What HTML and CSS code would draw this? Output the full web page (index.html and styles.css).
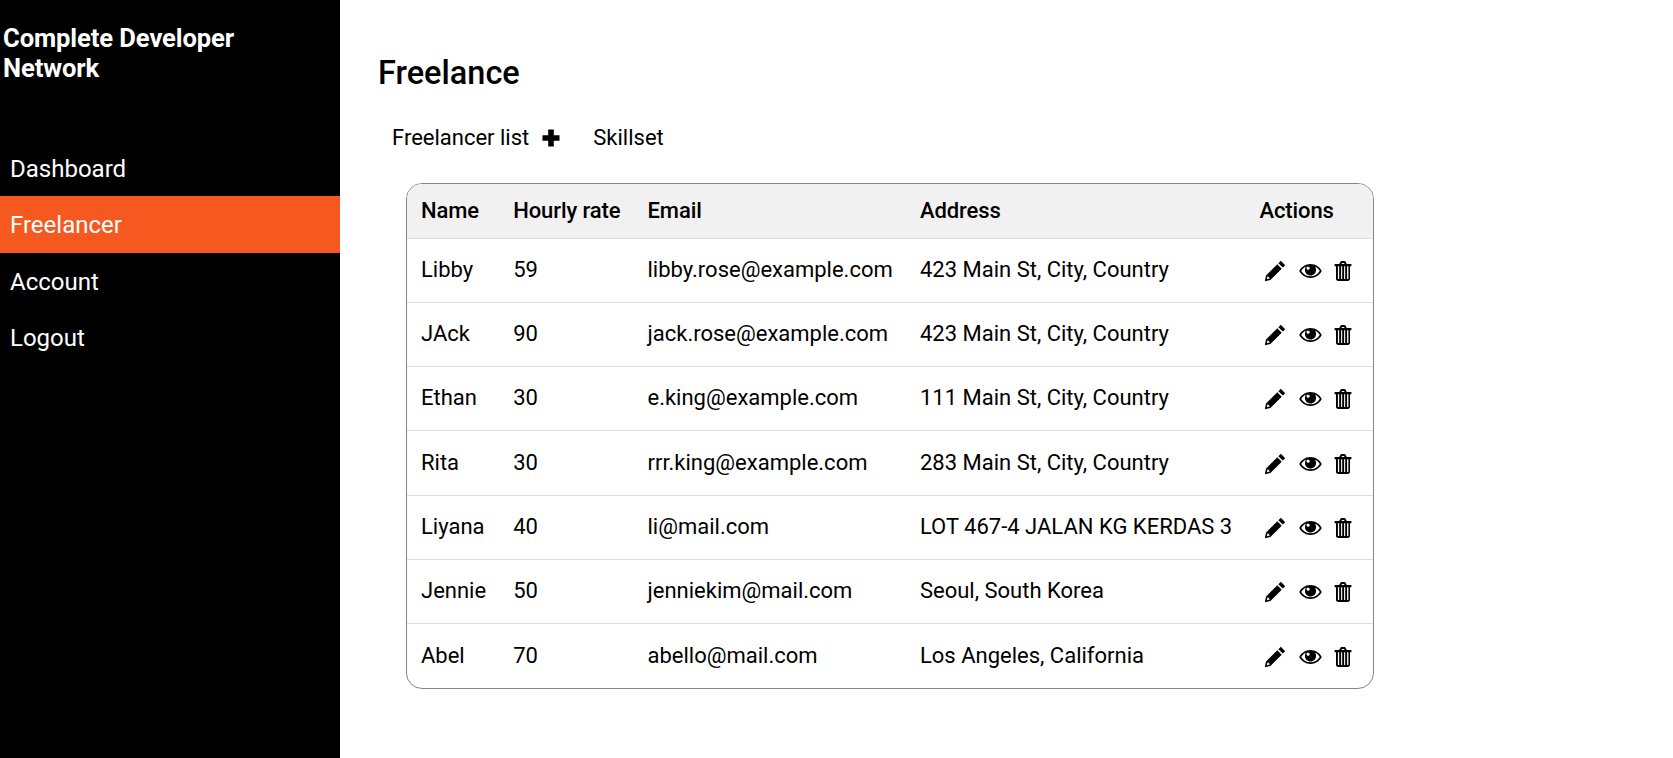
FILE: index.html
```html
<!DOCTYPE html>
<html>
<head>
    <title>Freelance</title>
    <link rel="stylesheet" href="styles.css">
</head>
<body>
    <svg class="sprites" width="0" height="0">
        <symbol id="i-pencil" viewBox="0 0 22 22">
            <path d="M16.800 .8 21.200 5.200 18.800 7.600 14.400 3.200Z"/>
            <path fill-rule="evenodd" d="M13.300 4.300 17.700 8.700 6.400 20 .8 21.200 2 15.600ZM3.600 16.200 2.800 19.200 5.800 18.400 5.400 17.800 4.100 16.500Z"/>
        </symbol>
        <symbol id="i-eye" viewBox="0 0 24 16">
            <path fill-rule="evenodd" d="M12 .8C6.800.8 2.600 3.700.2 8c2.400 4.300 6.600 7.200 11.800 7.200S21.400 12.300 23.800 8C21.400 3.700 17.200.8 12 .8ZM2.300 8C3.600 6 5.300 4.400 7.400 3.400 6.600 4.400 6.200 5.600 6.200 7c0 3.200 2.600 5.800 5.800 5.800s5.800-2.600 5.800-5.800c0-1.400-.4-2.600-1.200-3.600 2.100 1 3.800 2.600 5.100 4.600-2.300 3.500-5.800 5.600-9.700 5.600S4.600 11.500 2.300 8Z"/>
            <path fill="#fff" d="M9.500 3.600c1 0 1.700.6 1.700 1.500S10.500 6.700 9.500 6.700 7.800 6 7.800 5.100 8.500 3.600 9.500 3.600Z"/>
        </symbol>
        <symbol id="i-trash" viewBox="0 0 18 20">
            <path fill-rule="evenodd" d="M5.200 3 6.400.8C6.600.4 7 .1 7.400.1h3.200c.4 0 .8.300 1 .7L12.800 3h4.600v2.200H.6V3ZM7.500 3h3l-.5-1H8Z"/>
            <path d="M2 5h1.900v12.600c0 .3.100.5.200.5h1.100V5h1.900v13.100h1.100V5h1.900v13.100h1.100V5h1.900v13.100h1.100c.1 0 .2-.2.200-.5V5H16v12.700c0 1.300-.9 2.200-2.100 2.200H4.100C2.900 19.900 2 19 2 17.700Z"/>
        </symbol>
    </svg>

    <div class="layout">
        <aside class="sidebar">
            <h2 class="brand">Complete Developer Network</h2>
            <nav class="side-nav">
                <a href="#">Dashboard</a>
                <a href="#" class="active">Freelancer</a>
                <a href="#">Account</a>
                <a href="#">Logout</a>
            </nav>
        </aside>

        <main class="content">
            <h1 class="page-title">Freelance</h1>
            <div class="tabs">
                <a href="#" class="tab">Freelancer list</a>
                <a href="#" class="add-btn" aria-label="Add">
                    <svg width="18" height="18" viewBox="0 0 18 18"><path d="M6.200.500h5.600v5.700h5.700v5.600h-5.700v5.700H6.200v-5.700H.5V6.200h5.700Z"/></svg>
                </a>
                <a href="#" class="tab">Skillset</a>
            </div>

            <div class="table-wrap">
                <table class="people">
                    <thead>
                        <tr>
                            <th>Name</th>
                            <th>Hourly rate</th>
                            <th>Email</th>
                            <th>Address</th>
                            <th>Actions</th>
                        </tr>
                    </thead>
                    <tbody>
                        <tr>
                            <td>Libby</td><td>59</td><td>libby.rose@example.com</td><td>423 Main St, City, Country</td>
                            <td class="actions"><svg class="pencil"><use href="#i-pencil"/></svg><svg class="eye"><use href="#i-eye"/></svg><svg class="trash"><use href="#i-trash"/></svg></td>
                        </tr>
                        <tr>
                            <td>JAck</td><td>90</td><td>jack.rose@example.com</td><td>423 Main St, City, Country</td>
                            <td class="actions"><svg class="pencil"><use href="#i-pencil"/></svg><svg class="eye"><use href="#i-eye"/></svg><svg class="trash"><use href="#i-trash"/></svg></td>
                        </tr>
                        <tr>
                            <td>Ethan</td><td>30</td><td>e.king@example.com</td><td>111 Main St, City, Country</td>
                            <td class="actions"><svg class="pencil"><use href="#i-pencil"/></svg><svg class="eye"><use href="#i-eye"/></svg><svg class="trash"><use href="#i-trash"/></svg></td>
                        </tr>
                        <tr>
                            <td>Rita</td><td>30</td><td>rrr.king@example.com</td><td>283 Main St, City, Country</td>
                            <td class="actions"><svg class="pencil"><use href="#i-pencil"/></svg><svg class="eye"><use href="#i-eye"/></svg><svg class="trash"><use href="#i-trash"/></svg></td>
                        </tr>
                        <tr>
                            <td>Liyana</td><td>40</td><td>li@mail.com</td><td>LOT 467-4 JALAN KG KERDAS 3</td>
                            <td class="actions"><svg class="pencil"><use href="#i-pencil"/></svg><svg class="eye"><use href="#i-eye"/></svg><svg class="trash"><use href="#i-trash"/></svg></td>
                        </tr>
                        <tr>
                            <td>Jennie</td><td>50</td><td>jenniekim@mail.com</td><td>Seoul, South Korea</td>
                            <td class="actions"><svg class="pencil"><use href="#i-pencil"/></svg><svg class="eye"><use href="#i-eye"/></svg><svg class="trash"><use href="#i-trash"/></svg></td>
                        </tr>
                        <tr>
                            <td>Abel</td><td>70</td><td>abello@mail.com</td><td>Los Angeles, California</td>
                            <td class="actions"><svg class="pencil"><use href="#i-pencil"/></svg><svg class="eye"><use href="#i-eye"/></svg><svg class="trash"><use href="#i-trash"/></svg></td>
                        </tr>
                    </tbody>
                </table>
            </div>
        </main>
    </div>
</body>
</html>
```

FILE: styles.css
```css
* {
    box-sizing: border-box;
}
html, body {
    height: 100%;
}
body {
    margin: 0;
    font-family: Roboto, sans-serif;
    color: #000;
    background-color: #fff;
    overflow: hidden;
}
a {
    color: inherit;
    text-decoration: none;
}
.sprites {
    position: absolute;
}
.layout {
    display: flex;
    height: 100%;
}

.sidebar {
    width: 340px;
    flex-shrink: 0;
    background-color: #000;
    color: #fff;
}
.brand {
    margin: 0;
    padding: 23px 3px 0;
    width: 280px;
    font-size: 25.6px;
    line-height: 30px;
    font-weight: 700;
    letter-spacing: -0.1px;
}
.side-nav {
    margin-top: 56.5px;
}
.side-nav a {
    display: block;
    height: 56.5px;
    line-height: 54.5px;
    padding: 2px 0 0 10px;
    font-size: 24px;
}
.side-nav a.active {
    background-color: #f5591f;
}

.content {
    flex: 1;
    padding: 53px 0 0 38px;
}
.page-title {
    margin: 0;
    font-size: 32.5px;
    line-height: 40px;
    font-weight: 500;
}
.tabs {
    display: flex;
    align-items: center;
    margin-top: 29px;
    padding-left: 14px;
    font-size: 22px;
    line-height: 32px;
}
.add-btn {
    display: flex;
    margin: 0 33px 0 13px;
}

.table-wrap {
    width: 968px;
    margin: 29px 0 0 28px;
    border: 1px solid #858585;
    border-radius: 16px;
    overflow: hidden;
}
.people {
    width: 100%;
    border-collapse: collapse;
    font-size: 22px;
}
.people th {
    height: 54px;
    padding: 0 13.5px 1px;
    text-align: left;
    font-weight: 500;
    letter-spacing: -0.1px;
    background-color: #f1f1f1;
    white-space: nowrap;
}
.people td {
    height: 64.3px;
    padding: 0 13.5px 2px;
    white-space: nowrap;
    border-top: 1px solid #ddd;
}
.people tr > :first-child {
    padding-left: 14px;
}
.actions svg {
    display: inline-block;
    vertical-align: middle;
}
.pencil {
    width: 22px;
    height: 22px;
    margin-left: 5px;
}
.eye {
    width: 23px;
    height: 16px;
    margin-left: 13px;
}
.trash {
    width: 18px;
    height: 20px;
    margin: 0 7px 0 12px;
}
```
